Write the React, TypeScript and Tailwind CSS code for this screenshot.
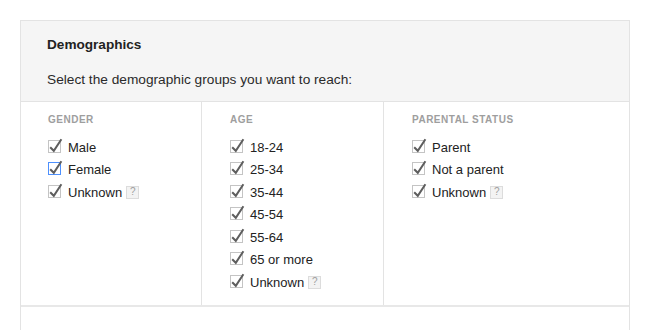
import React from "react";

interface Option {
  label: string;
  help?: boolean;
  focused?: boolean;
}

interface Group {
  title: string;
  options: Option[];
  className: string;
}

const groups: Group[] = [
  {
    title: "Gender",
    className: "w-[181px] border-r border-[#e3e3e3] pl-[27px]",
    options: [
      { label: "Male" },
      { label: "Female", focused: true },
      { label: "Unknown", help: true },
    ],
  },
  {
    title: "Age",
    className: "w-[182px] border-r border-[#e3e3e3] pl-[28px]",
    options: [
      { label: "18-24" },
      { label: "25-34" },
      { label: "35-44" },
      { label: "45-54" },
      { label: "55-64" },
      { label: "65 or more" },
      { label: "Unknown", help: true },
    ],
  },
  {
    title: "Parental status",
    className: "flex-1 pl-[28px]",
    options: [
      { label: "Parent" },
      { label: "Not a parent" },
      { label: "Unknown", help: true },
    ],
  },
];

function CheckBox({ focused }: { focused?: boolean }) {
  return (
    <svg width="16" height="16" viewBox="0 0 16 16" className="-mt-[3px] shrink-0 overflow-visible">
      <rect
        x="0.5"
        y="2.5"
        width="12"
        height="12"
        fill="#fff"
        stroke={focused ? "#4d90fe" : "#c4c4c4"}
      />
      <path d="M2.2 9.2 L5.8 12.8 L13.4 1.2" fill="none" stroke="#5e5e5e" strokeWidth="2" />
    </svg>
  );
}

function HelpBadge() {
  return (
    <span className="ml-[4px] flex h-[13px] w-[13px] items-center justify-center border border-[#dcdcdc] bg-[#f3f3f3] text-[10px] leading-none text-[#a0a0a0]">
      ?
    </span>
  );
}

export default function App() {
  return (
    <div className="h-[330px] overflow-hidden bg-white pt-[20px] font-['Liberation_Sans',Arial,sans-serif]">
      <div className="ml-[20px] w-[610px] border-x border-t border-[#e3e3e3]">
        <div className="h-[81px] border-b border-[#e3e3e3] bg-[#f5f5f5] pl-[26px] pt-[15px]">
          <h2 className="text-[13.6px] font-bold leading-[18px] text-[#222]">Demographics</h2>
          <p className="mt-[17px] text-[13.7px] leading-[18px] text-[#2a2a2a]">
            Select the demographic groups you want to reach:
          </p>
        </div>
        <div className="flex h-[205px] border-b-2 border-[#e8e8e8]">
          {groups.map((g) => (
            <div key={g.title} className={g.className}>
              <div className="pt-[12px] text-[10px] font-bold uppercase leading-[12px] tracking-[0.5px] text-[#9e9e9e]">
                {g.title}
              </div>
              <ul className="mt-[10px]">
                {g.options.map((o) => (
                  <li key={o.label} className="flex h-[22.5px] items-center text-[13px] text-[#222]">
                    <CheckBox focused={o.focused} />
                    <span className="ml-[4px]">{o.label}</span>
                    {o.help && <HelpBadge />}
                  </li>
                ))}
              </ul>
            </div>
          ))}
        </div>
        <div className="h-[40px]" />
      </div>
    </div>
  );
}
